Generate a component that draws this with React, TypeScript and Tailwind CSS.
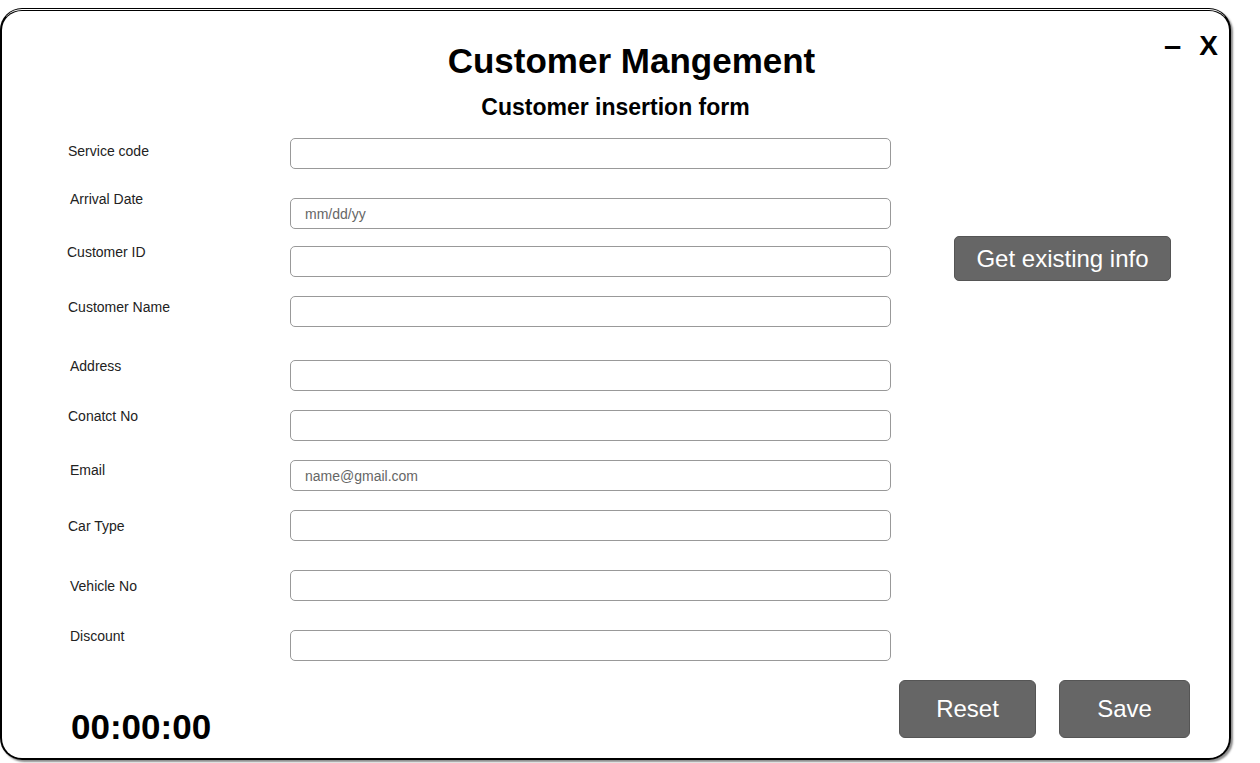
import React from "react";

interface Field {
  label: string;
  placeholder?: string;
  rowHeight: number;
  labelX: number;
  labelY: number;
}

// labelY: offset of label top from the input top
const fields: Field[] = [
  { label: "Service code", rowHeight: 60, labelX: 66, labelY: 5 },
  { label: "Arrival Date", placeholder: "mm/dd/yy", rowHeight: 48, labelX: 68, labelY: -7 },
  { label: "Customer ID", rowHeight: 50, labelX: 65, labelY: -2 },
  { label: "Customer Name", rowHeight: 64, labelX: 66, labelY: 3 },
  { label: "Address", rowHeight: 50, labelX: 68, labelY: -2 },
  { label: "Conatct No", rowHeight: 50, labelX: 66, labelY: -2 },
  { label: "Email", placeholder: "name@gmail.com", rowHeight: 50, labelX: 68, labelY: 2 },
  { label: "Car Type", rowHeight: 60, labelX: 66, labelY: 8 },
  { label: "Vehicle No", rowHeight: 60, labelX: 68, labelY: 8 },
  { label: "Discount", rowHeight: 30, labelX: 68, labelY: -2 },
];

function FormRow({ field }: { field: Field }) {
  return (
    <div className="flex items-start" style={{ height: field.rowHeight }}>
      <div className="w-[288px] shrink-0">
        <div
          className="text-[14px] leading-4 text-[#222]"
          style={{ marginLeft: field.labelX, marginTop: field.labelY }}
        >
          {field.label}
        </div>
      </div>
      <input
        type="text"
        placeholder={field.placeholder}
        className="w-[601px] h-[31px] rounded-[5px] border border-[#999] bg-white px-[14px] text-[14px] text-[#222] outline-none placeholder:text-[#666]"
      />
    </div>
  );
}

export default function App() {
  return (
    <div
      className="w-[1260px] h-[763px] bg-white pt-2"
      style={{ fontFamily: '"Liberation Sans", Arial, sans-serif' }}
    >
      <div className="relative w-[1231px] h-[752px] rounded-[22px] border-2 border-black border-t-[3px] [border-top-style:double] bg-white shadow-[2px_2px_2px_rgba(0,0,0,0.45)]">
        {/* window controls */}
        <div className="absolute right-[11px] top-[19px] flex items-center gap-[18px] font-bold text-black">
          <span className="text-[31px] leading-8">–</span>
          <span className="text-[28px] leading-8">X</span>
        </div>

        <div className="pt-[30px]">
          <h1 className="pl-[32px] text-center text-[35px] leading-10 font-bold text-black">
            Customer Mangement
          </h1>
          <h2 className="mt-[13px] text-center text-[23px] leading-[27px] font-bold text-black">
            Customer insertion form
          </h2>

          <div className="mt-[17px] flex">
            <div className="flex flex-col">
              {fields.map((f) => (
                <FormRow key={f.label} field={f} />
              ))}
            </div>
            <div className="ml-[63px] mt-[98px]">
              <button className="w-[217px] h-[45px] rounded-[5px] border border-[#555] bg-[#666] text-[24px] text-white">
                Get existing info
              </button>
            </div>
          </div>

          <div className="mt-[20px] flex items-start">
            <div className="ml-[69px] mt-[27px] text-[35px] leading-10 font-bold text-black">
              00:00:00
            </div>
            <div className="ml-auto mr-[39px] flex gap-[23px]">
              <button className="w-[137px] h-[58px] rounded-[6px] border border-[#555] bg-[#666] text-[24px] text-white">
                Reset
              </button>
              <button className="w-[131px] h-[58px] rounded-[6px] border border-[#555] bg-[#666] text-[24px] text-white">
                Save
              </button>
            </div>
          </div>
        </div>
      </div>
    </div>
  );
}
